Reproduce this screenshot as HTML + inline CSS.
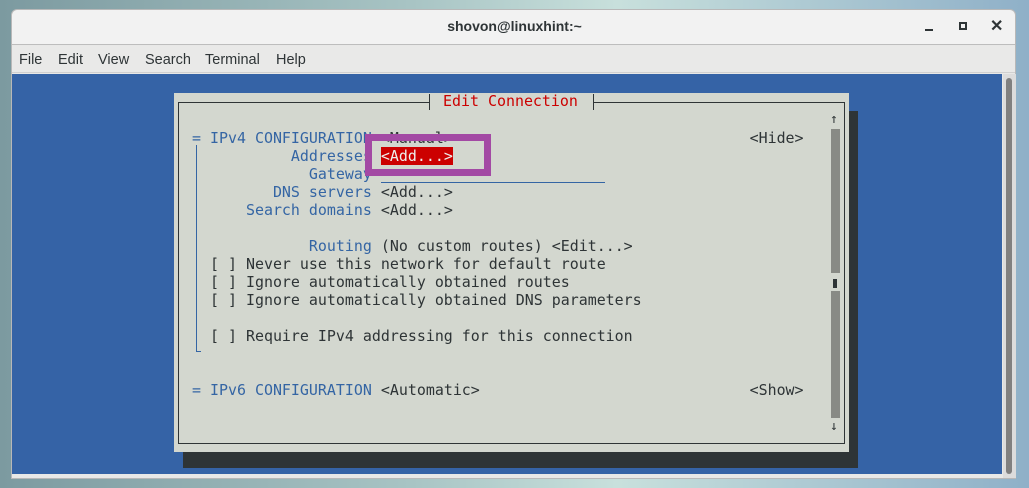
<!DOCTYPE html>
<html><head><style>
*{margin:0;padding:0;box-sizing:border-box}
body{width:1029px;height:488px;overflow:hidden;background:linear-gradient(90deg,#7c9aa0,#a8c4c4 40%,#c8e0dc 60%,#8fb0c8);position:relative;font-family:"DejaVu Sans Mono","Liberation Mono",monospace}
.a{position:absolute}
#win{left:11px;top:9px;width:1005px;height:470px;background:#e8e8e7;border-radius:6px 6px 0 0;border:1px solid #b8b8b8}
#title{left:12px;top:10px;width:1003px;height:35px;background:#f2f2f2;border-radius:6px 6px 0 0;border-bottom:1px solid #bdbdbd}
#menu{left:12px;top:46px;width:1003px;height:27px;background:#e9e9e8;border-bottom:1px solid #d0d0d0;font-family:"Liberation Sans",sans-serif;font-size:14.5px;color:#2e3436}
#menu span{position:absolute;top:6px}
#term{left:12px;top:74px;width:990px;height:400px;background:#3563a6}
.t{font-size:14.95px;line-height:18px;white-space:pre;color:#2e3436}
.b{color:#3465a4}
</style></head><body>
<div class="a" id="win"></div>
<div class="a" id="title"></div>
<div class="a" style="left:0;width:1029px;top:18px;text-align:center;font-family:'Liberation Sans',sans-serif;font-weight:bold;font-size:14px;color:#2e3436">shovon@linuxhint:~</div>
<div class="a" style="left:925px;top:29px;width:8px;height:2px;background:#2e3436"></div>
<div class="a" style="left:959px;top:22px;width:8px;height:8px;border:2px solid #2e3436"></div>
<div class="a" style="left:990px;top:16px;font-family:'Liberation Sans',sans-serif;font-size:16px;font-weight:bold;color:#2e3436">✕</div>
<div class="a" id="menu"><span style="left:7px">File</span><span style="left:46px">Edit</span><span style="left:86px">View</span><span style="left:133px">Search</span><span style="left:193px">Terminal</span><span style="left:264px">Help</span></div>
<div class="a" id="term"></div>
<div class="a" style="left:1003px;top:74px;width:13px;height:404px;background:#dcdcdc"></div>
<div class="a" style="left:1006px;top:78px;width:6px;height:396px;background:#808080;border-radius:3px"></div>
<div class="a" style="left:183px;top:111px;width:675px;height:357px;background:#2e3436"></div>
<div class="a" style="left:174px;top:93px;width:675px;height:359px;background:#d3d7cf"></div>
<div class="a" style="left:178px;top:102px;width:667px;height:342px;border:1px solid #2e3436"></div>
<div class="a" style="left:429px;top:94px;width:165px;height:16px;background:#d3d7cf;border-left:1px solid #2e3436;border-right:1px solid #2e3436"></div>
<div class="a t" style="left:443px;top:92px;color:#cc0000">Edit Connection</div>
<div class="a t" style="left:830px;top:111px;font-size:13px">↑</div>
<div class="a" style="left:831px;top:129px;width:9px;height:144px;background:#888a85"></div>
<div class="a" style="left:833px;top:279px;width:4px;height:9px;background:#2e3436"></div>
<div class="a" style="left:831px;top:291px;width:9px;height:127px;background:#888a85"></div>
<div class="a t" style="left:830px;top:418px;font-size:13px">↓</div>
<div class="a" style="left:196px;top:145px;width:1px;height:207px;background:#3465a4"></div>
<div class="a" style="left:196px;top:351px;width:5px;height:1px;background:#3465a4"></div>
<div class="a" style="left:381px;top:182px;width:224px;height:1px;background:#3465a4"></div>
<div class="a t" style="left:192px;top:129px"><span class="b">= IPv4 CONFIGURATION</span> &lt;Manual&gt;                                 &lt;Hide&gt;
<span class="b">           Addresses</span> <span style="background:#cc0000;color:#eeeeec">&lt;Add...&gt;</span>
<span class="b">             Gateway</span>
<span class="b">         DNS servers</span> &lt;Add...&gt;
<span class="b">      Search domains</span> &lt;Add...&gt;

<span class="b">             Routing</span> (No custom routes) &lt;Edit...&gt;
  [ ] Never use this network for default route
  [ ] Ignore automatically obtained routes
  [ ] Ignore automatically obtained DNS parameters

  [ ] Require IPv4 addressing for this connection


<span class="b">= IPv6 CONFIGURATION</span> &lt;Automatic&gt;                              &lt;Show&gt;</div>
<div class="a" style="left:365px;top:134px;width:126px;height:42px;border:7px solid #a349a4"></div>
</body></html>
